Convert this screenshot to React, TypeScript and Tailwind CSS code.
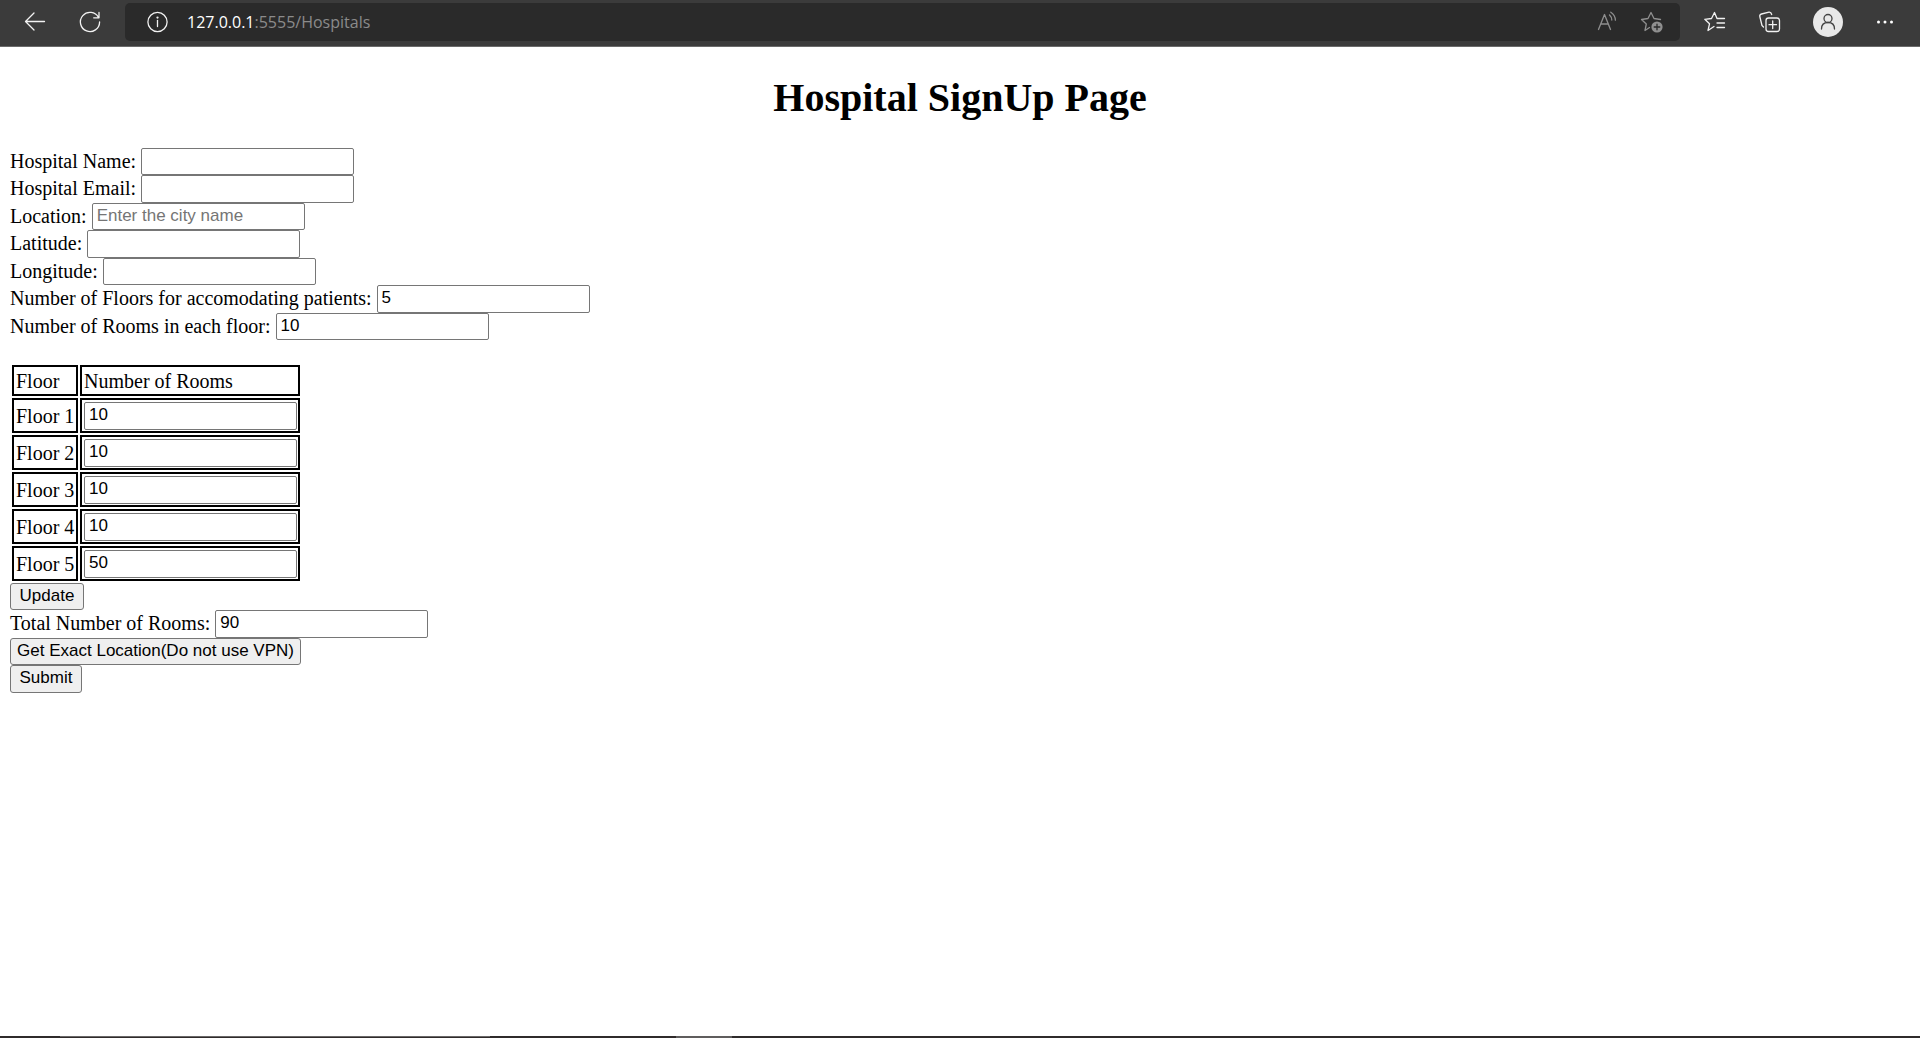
import { useState } from "react";
import type { ReactNode } from "react";

const field =
  "w-[213px] rounded-[2px] border border-[#767676] bg-white px-1 pb-[2px] font-['Liberation_Sans',Arial,sans-serif] text-[17px] leading-5 text-black placeholder:text-[#757575]";
const button =
  "h-full rounded-[3px] border border-[#767676] bg-[#efefef] pb-[2px] text-center font-['Liberation_Sans',Arial,sans-serif] text-[17px] leading-5 whitespace-nowrap text-black";
const row = "flex items-start gap-[5px] odd:h-[27px] even:h-7";
const cell = "border-2 border-black py-px pr-px pl-[2px]";

type FieldProps = { id: string; label: string; value?: string; placeholder?: string };

function Field({ id, label, value = "", placeholder }: FieldProps) {
  return (
    <div className={row}>
      <label htmlFor={id} className="whitespace-nowrap">{label}</label>
      <input id={id} type="text" defaultValue={value} placeholder={placeholder} className={`${field} h-full`} />
    </div>
  );
}

function Icon({ children, className = "text-[#f2f2f2]" }: { children: ReactNode; className?: string }) {
  return (
    <svg viewBox="0 0 24 24" className={`size-6 ${className}`} fill="none" stroke="currentColor" strokeWidth="1.3" strokeLinecap="round" strokeLinejoin="round" aria-hidden="true">
      {children}
    </svg>
  );
}

function BrowserBar() {
  return (
    <header className="flex h-[47px] items-start border-b border-[#6a6a6a] bg-[#3b3b3b] pt-[3px] pr-[22px] pl-[23px]">
      <div className="flex h-[38px] items-center gap-[31px] pr-[23px]">
        <button type="button" aria-label="Back">
          <Icon><path d="M2.5 11.5h19M11 3L2.5 11.5L11 20" /></Icon>
        </button>
        <button type="button" aria-label="Refresh">
          <Icon><path d="M20.5 7.5A9.6 9.6 0 1 0 21.6 12M21 2.5v5.3h-5.3" /></Icon>
        </button>
      </div>
      <div className="flex h-[38px] min-w-0 flex-1 items-center rounded-[5px] bg-[#2a2a2a] pr-4 pl-5">
        <button type="button" aria-label="Site information">
          <Icon>
            <circle cx="12.5" cy="12" r="9.6" />
            <path d="M12.5 10.5v6" />
            <circle cx="12.5" cy="7.6" r="0.5" fill="currentColor" />
          </Icon>
        </button>
        <p className="ml-[18px] flex-1 font-['Open_Sans',sans-serif] text-base text-[#8b8b8b]">
          <span className="text-white">127.0.0.1</span>:5555/Hospitals
        </p>
        <div className="flex gap-5">
          <button type="button" aria-label="Read aloud">
            <Icon className="text-[#8f8f8f]"><path d="M2.5 19.5L8.5 4.5L14.5 19.5M4.7 14h7.6M13.5 5q2.3 2 2.3 5M14.8 2.2q4.5 3 4.6 8" /></Icon>
          </button>
          <button type="button" aria-label="Add to favorites">
            <Icon className="text-[#8f8f8f]">
              <path d="M9.5 17.5L5 20.5L6.3 14L1.5 9.5L8 8.5L11 2.5L14 8.5L20.5 9.5" />
              <circle cx="17" cy="17" r="5.6" fill="currentColor" stroke="none" />
              <path d="M17 14.2v5.6M14.2 17h5.6" stroke="#2a2a2a" />
            </Icon>
          </button>
        </div>
      </div>
      <div className="flex h-[38px] items-center pl-[23px]">
        <button type="button" aria-label="Favorites">
          <Icon><path d="M11 16.5L5 20.5L6.5 13.8L1.8 9.3L8.5 8.5L11.5 2.5L14 8.5H21.5M14 13h7.5M14 17.5h7.5" /></Icon>
        </button>
        <button type="button" aria-label="Collections" className="ml-[31px]">
          <Icon>
            <rect x="8" y="8" width="13.5" height="13.5" rx="2.5" />
            <path d="M14.7 11v7.5M11 14.7h7.5M5.5 17L4 15.5L1.8 6.5Q1.5 4.5 3.5 4L11 2.2Q13 1.9 13.7 4.5" />
          </Icon>
        </button>
        <button type="button" aria-label="Profile" className="ml-[31px] flex size-[30px] items-center justify-center rounded-full bg-[#e8e8e8]">
          <Icon className="text-[#444]"><circle cx="12" cy="8.5" r="4" /><path d="M5.5 19q0-6.5 6.5-6.5t6.5 6.5" /></Icon>
        </button>
        <button type="button" aria-label="More" className="ml-[31px]">
          <Icon className="text-white">
            <g fill="currentColor" stroke="none"><circle cx="4.5" cy="12" r="1.5" /><circle cx="11" cy="12" r="1.5" /><circle cx="17.5" cy="12" r="1.5" /></g>
          </Icon>
        </button>
      </div>
    </header>
  );
}

const initialRooms = ["10", "10", "10", "10", "50"];

export default function App() {
  const [rooms, setRooms] = useState(initialRooms);
  return (
    <div className="flex min-h-screen flex-col bg-white">
      <BrowserBar />
      <main className="flex-1 px-[10px] font-['Liberation_Serif','Times_New_Roman',serif] text-[20px] leading-[26px] text-black">
        <h1 className="pt-7 pb-[27px] text-center text-[40px] leading-[46px] font-bold">Hospital SignUp Page</h1>
        <form onSubmit={(e) => e.preventDefault()}>
          <div>
            <Field id="name" label="Hospital Name:" />
            <Field id="email" label="Hospital Email:" />
            <Field id="location" label="Location:" placeholder="Enter the city name" />
            <Field id="latitude" label="Latitude:" />
            <Field id="longitude" label="Longitude:" />
            <Field id="floors" label="Number of Floors for accomodating patients:" value="5" />
            <Field id="rooms" label="Number of Rooms in each floor:" value="10" />
          </div>
          <table className="mt-[23px] border-separate border-spacing-[2px] text-left leading-6">
            <thead>
              <tr className="h-[31px]">
                <th scope="col" className={`${cell} w-[66px] font-normal`}>Floor</th>
                <th scope="col" className={`${cell} w-[220px] font-normal`}>Number of Rooms</th>
              </tr>
            </thead>
            <tbody>
              {rooms.map((count, i) => (
                <tr key={i} className="h-[35px]">
                  <td className={`${cell} whitespace-nowrap`}><label htmlFor={`floor-${i + 1}`}>Floor {i + 1}</label></td>
                  <td className={cell}>
                    <input
                      id={`floor-${i + 1}`}
                      type="text"
                      value={count}
                      onChange={(e) => setRooms(rooms.map((r, j) => (j === i ? e.target.value : r)))}
                      className={`${field} block h-7`}
                    />
                  </td>
                </tr>
              ))}
            </tbody>
          </table>
          <div>
            <div className={row}><button type="button" className={`${button} w-[74px]`}>Update</button></div>
            <Field id="total" label="Total Number of Rooms:" value="90" />
            <div className={row}><button type="button" className={`${button} w-[291px]`}>Get Exact Location(Do not use VPN)</button></div>
            <div className={row}><button type="submit" className={`${button} w-[72px]`}>Submit</button></div>
          </div>
        </form>
      </main>
      <footer className="flex h-[2px] bg-[#2f2b2b]">
        <div className="ml-[60px] w-[430px] border-t border-[#6a6868]" />
        <div className="ml-[186px] w-14 bg-[#5f5d5d]" />
      </footer>
    </div>
  );
}
